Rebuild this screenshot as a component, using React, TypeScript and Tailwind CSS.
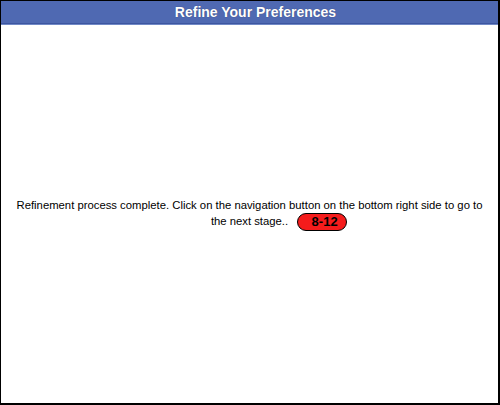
export default function App() {
  return (
    <div className="w-[500px] h-[405px] flex flex-col border-l border-t border-r-2 border-b-2 border-black bg-white font-['Liberation_Sans',Arial,sans-serif]">
      <div className="h-[23px] shrink-0 flex items-center justify-center pl-3 bg-[#4f69b2] border-b border-[#3d56a0] text-white font-bold text-[14px] [text-shadow:0_0_1px_rgba(0,0,0,0.4)]">
        Refine Your Preferences
      </div>
      <div className="h-px bg-[#7088c6] shrink-0" />
      <div className="flex-1 flex items-center justify-center px-2">
        <p className="text-center text-[11.3px] leading-[15px] text-black">
          Refinement process complete. Click on the navigation button on the bottom right side to go to the next stage..
          <span className="inline-flex items-center justify-center ml-[9px] mr-[-59px] align-middle w-[50px] h-[18px] pl-[5px] rounded-full bg-[#f51c1c] border border-black font-bold text-[13px] leading-none">
            8-12
          </span>
        </p>
      </div>
    </div>
  );
}
